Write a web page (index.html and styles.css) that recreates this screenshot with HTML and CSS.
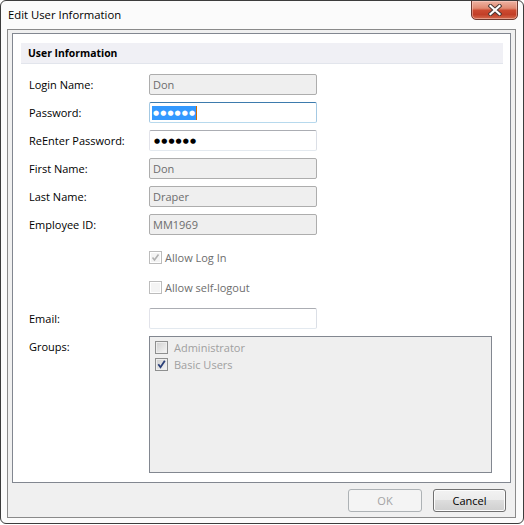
FILE: index.html
```html
<!DOCTYPE html>
<html>
<head>
<meta charset="utf-8">
<link rel="stylesheet" href="styles.css">
</head>
<body>
<div class="window">
  <div class="titlebar">
    <div class="title">Edit User Information</div>
    <div class="close">
      <svg width="14" height="12" viewBox="0 0 14 12">
        <path d="M2.5 2 L11.5 10 M11.5 2 L2.5 10" stroke="#4b3a36" stroke-width="4.2" stroke-linecap="square" fill="none"/>
        <path d="M2.5 2 L11.5 10 M11.5 2 L2.5 10" stroke="#ffffff" stroke-width="2.2" stroke-linecap="square" fill="none"/>
      </svg>
    </div>
  </div>
  <div class="client">
    <div class="panel">
      <div class="section-header">User Information</div>

      <div class="row first">
        <div class="label">Login Name:</div>
        <div class="field disabled">Don</div>
      </div>
      <div class="row">
        <div class="label">Password:</div>
        <div class="field focused"><span class="selection">●●●●●●</span></div>
      </div>
      <div class="row">
        <div class="label">ReEnter Password:</div>
        <div class="field"><span class="dots">●●●●●●</span></div>
      </div>
      <div class="row">
        <div class="label">First Name:</div>
        <div class="field disabled">Don</div>
      </div>
      <div class="row">
        <div class="label">Last Name:</div>
        <div class="field disabled">Draper</div>
      </div>
      <div class="row">
        <div class="label">Employee ID:</div>
        <div class="field disabled">MM1969</div>
      </div>

      <div class="row check-row cr1">
        <div class="label"></div>
        <span class="cb cb-disabled">
          <svg width="11" height="11" viewBox="0 0 11 11"><path d="M2.5 5.5 L4.5 8 L8.5 2.5" stroke="#b0b0b0" stroke-width="1.6" fill="none"/></svg>
        </span>
        <span class="cb-text">Allow Log In</span>
      </div>
      <div class="row check-row cr2">
        <div class="label"></div>
        <span class="cb cb-disabled"></span>
        <span class="cb-text">Allow self-logout</span>
      </div>

      <div class="row email-row">
        <div class="label">Email:</div>
        <div class="field"></div>
      </div>

      <div class="row groups-row">
        <div class="label groups-label">Groups:</div>
        <div class="list">
          <div class="item">
            <span class="cb cb-list"></span>
            <span class="item-text">Administrator</span>
          </div>
          <div class="item">
            <span class="cb cb-list">
              <svg width="11" height="11" viewBox="0 0 11 11"><path d="M2.3 5.3 L4.5 8.2 L8.8 1.8" stroke="#2a3f78" stroke-width="1.8" fill="none"/></svg>
            </span>
            <span class="item-text">Basic Users</span>
          </div>
        </div>
      </div>
    </div>
    <div class="buttons">
      <div class="btn btn-disabled">OK</div>
      <div class="btn btn-cancel">Cancel</div>
    </div>
  </div>
</div>
</body>
</html>
```
FILE: styles.css
```css
* { box-sizing: border-box; }
html, body { margin: 0; padding: 0; background: #ffffff; }
body {
  font-family: "Open Sans", "Noto Sans", sans-serif;
  font-size: 11px;
  color: #000;
}
.window {
  width: 524px;
  height: 524px;
  border: 1px solid #3c3c3c;
  border-radius: 6px;
  background: #fbfbfb;
  display: flex;
  flex-direction: column;
  overflow: hidden;
}
.titlebar {
  height: 28px;
  flex: none;
  display: flex;
  align-items: flex-start;
}
.title {
  padding: 6px 0 0 7px;
  font-size: 11.3px;
  line-height: 16px;
  color: #000;
}
.close {
  margin-left: auto;
  margin-right: 5px;
  margin-top: -1px;
  width: 47px;
  height: 20px;
  border: 1px solid #6e3a30;
  border-radius: 0 0 5px 5px;
  background: linear-gradient(#eeb3a3 0%, #e08a72 40%, #cc4a31 52%, #c23f28 75%, #d46a4e 100%);
  box-shadow: inset 0 0 0 1px rgba(255, 220, 210, 0.45);
  display: flex;
  align-items: center;
  justify-content: center;
}
.close svg { display: block; }
.client {
  flex: 1;
  margin: 0 7px 5px 6px;
  border: 1px solid #8a8a8a;
  background: #f0f0f0;
  padding: 3px 4px 5px 4px;
  display: flex;
  flex-direction: column;
}
.panel {
  height: 450px;
  flex: none;
  border: 1px solid #828790;
  background: #ffffff;
  padding: 9px 7px 0 8px;
}
.section-header {
  height: 21px;
  line-height: 20px;
  background: #f0f0f5;
  border-bottom: 1px solid #e2e5ec;
  padding-left: 7px;
  font-weight: bold;
  font-size: 10.4px;
}
.row {
  display: flex;
  align-items: center;
  height: 21px;
  margin-top: 7px;
}
.row.first { margin-top: 10px; }
.row.cr1 { margin-top: 12px; }
.row.cr2 { margin-top: 9px; }
.row.email-row { margin-top: 10px; }
.row.groups-row { margin-top: 7px; height: auto; align-items: flex-start; }
.label {
  width: 128px;
  flex: none;
  padding-left: 8px;
  line-height: 15px;
}
.groups-label { padding-top: 3px; }
.field {
  width: 168px;
  height: 21px;
  border: 1px solid;
  border-color: #abadb3 #dbdfe6 #e3e9ef #e2e3ea;
  border-radius: 2px;
  background: #ffffff;
  padding: 0 3px;
  line-height: 19px;
  display: flex;
  align-items: center;
}
.field.disabled {
  background: #efefef;
  border-color: #adadad;
  color: #6d6d6d;
}
.field.focused {
  border-color: #3d7bad #a4c9e3 #b7d9ed #a4c9e3;
  padding-left: 2px;
}
.selection, .dots {
  font-family: "DejaVu Sans", sans-serif;
  font-size: 7px;
  letter-spacing: 1.1px;
  line-height: 14px;
  height: 14px;
  display: inline-block;
}
.selection {
  background: #3399ff;
  color: #ffffff;
  border-right: 1px solid #d06a00;
  padding-left: 1px;
}
.dots { color: #000; padding-left: 1px; }
.cb {
  width: 13px;
  height: 13px;
  flex: none;
  border: 1px solid #8f8f8f;
  background: linear-gradient(135deg, #dcdcdc, #fbfbfb);
  box-shadow: inset 0 0 0 1px #f4f4f4;
  display: flex;
  align-items: center;
  justify-content: center;
}
.cb svg { display: block; }
.cb-disabled {
  border-color: #bcbcbc;
  background: #f4f4f4;
  box-shadow: inset 0 0 0 1px #ffffff;
}
.cb-text {
  margin-left: 3px;
  color: #6d6d6d;
  line-height: 15px;
}
.list {
  width: 343px;
  height: 137px;
  border: 1px solid #828790;
  background: #efefef;
  padding: 2px 0 0 5px;
}
.item {
  height: 17px;
  display: flex;
  align-items: center;
}
.cb-list {
  border-color: #8e8f8f;
  background: linear-gradient(135deg, #cfcfcf, #f6f6f6);
  box-shadow: inset 0 0 0 1px #eeeeee;
}
.item-text {
  margin-left: 6px;
  color: #a0a0a0;
  line-height: 15px;
}
.buttons {
  margin-top: 6px;
  display: flex;
  justify-content: flex-end;
  gap: 11px;
  padding-right: 5px;
}
.btn {
  height: 23px;
  border: 1px solid #707070;
  border-radius: 3px;
  display: flex;
  align-items: center;
  justify-content: center;
  line-height: 15px;
}
.btn-disabled {
  width: 74px;
  border-color: #adb2b5;
  background: #f4f4f4;
  color: #a3a3a3;
}
.btn-cancel {
  width: 73px;
  background: linear-gradient(#f2f2f2 0%, #ebebeb 50%, #dddddd 50%, #cfcfcf 100%);
  box-shadow: inset 0 0 0 1px #fcfcfc;
  color: #000;
}
```
